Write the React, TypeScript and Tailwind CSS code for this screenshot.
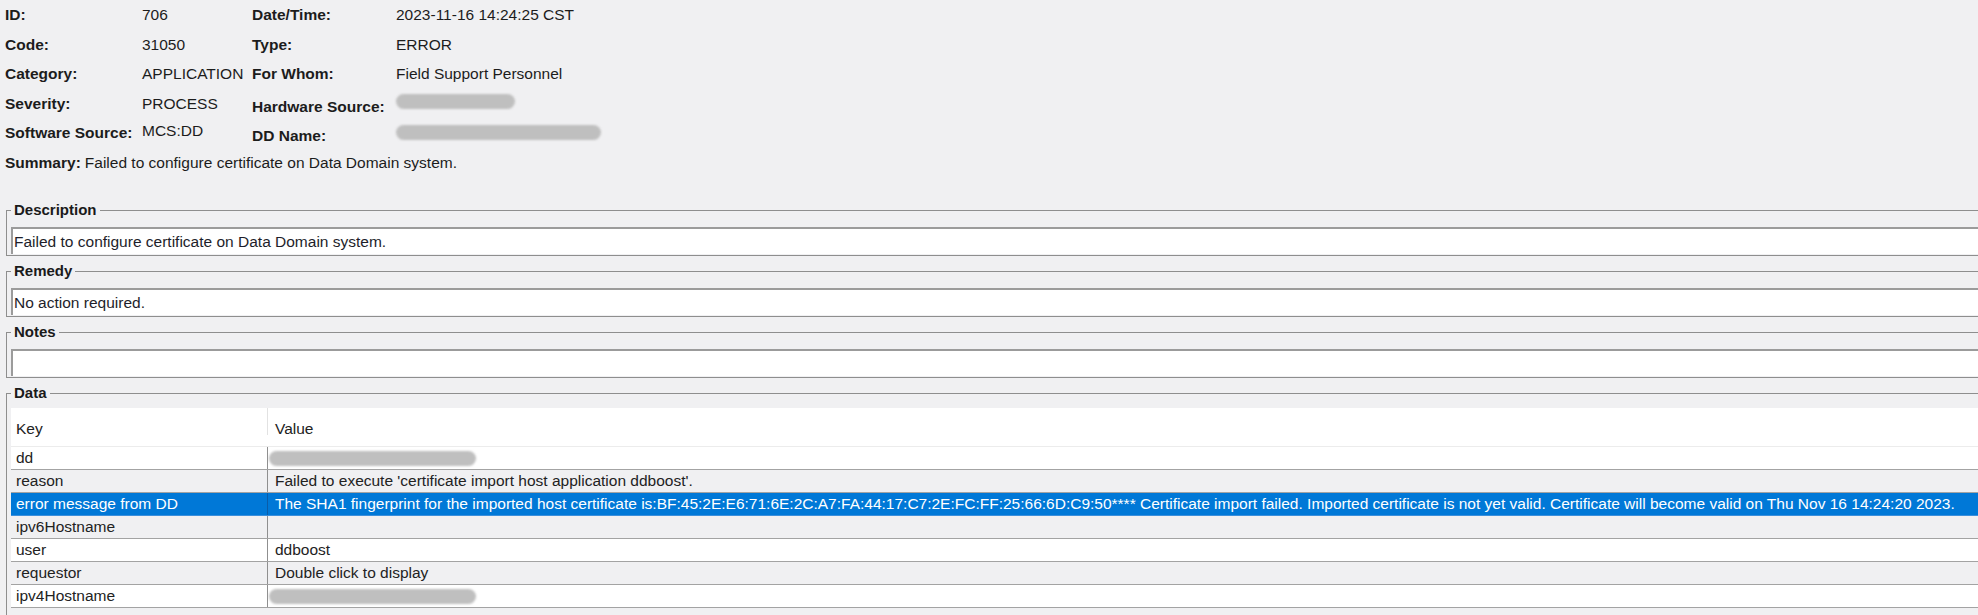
import type { ReactNode } from "react";

type Cell = string | { blur: string };

const META: [string, Cell, string, Cell][] = [
  ["ID:", "706", "Date/Time:", "2023-11-16 14:24:25 CST"],
  ["Code:", "31050", "Type:", "ERROR"],
  ["Category:", "APPLICATION", "For Whom:", "Field Support Personnel"],
  ["Severity:", "PROCESS", "Hardware Source:", { blur: "w-[119px]" }],
  ["Software Source:", "MCS:DD", "DD Name:", { blur: "w-[205px]" }],
];

const ROWS: { key: string; value: Cell }[] = [
  { key: "dd", value: { blur: "w-[207px]" } },
  { key: "reason", value: "Failed to execute 'certificate import host application ddboost'." },
  {
    key: "error message from DD",
    value:
      "The SHA1 fingerprint for the imported host certificate is:BF:45:2E:E6:71:6E:2C:A7:FA:44:17:C7:2E:FC:FF:25:66:6D:C9:50**** Certificate import failed. Imported certificate is not yet valid. Certificate will become valid on Thu Nov 16 14:24:20 2023.",
  },
  { key: "ipv6Hostname", value: "" },
  { key: "user", value: "ddboost" },
  { key: "requestor", value: "Double click to display" },
  { key: "ipv4Hostname", value: { blur: "w-[207px]" } },
];

const SELECTED = 2;

// Redacted text in the screenshot: a soft grey capsule.
function Blur({ width }: { width: string }) {
  return <span className={`inline-block h-[15px] rounded-full bg-[#bfbfbf] blur-[1px] ${width}`} />;
}

function Group({ title, children }: { title: string; children: ReactNode }) {
  return (
    <fieldset className="border border-[#8e8e8e] px-[4px] pb-[1px]">
      <legend className="px-[3px] text-[15px] leading-4 font-bold text-[#1a1a1a]">{title}</legend>
      {children}
    </fieldset>
  );
}

function TextField({ value }: { value: string }) {
  return (
    <div className="mt-[9px] h-[27px] border-t-2 border-l-2 border-[#9b9b9b] bg-white pl-[1px] leading-[25px] whitespace-nowrap text-[#1e1e2a]">
      {value}
    </div>
  );
}

export default function App() {
  return (
    <div className="h-[615px] w-[1978px] overflow-hidden bg-[#f0f0f2] font-['Liberation_Sans',Arial,sans-serif] text-[15.5px] text-[#1c1c1c]">
      <div className="w-[2020px]">
        <div className="grid grid-cols-[137px_110px_144px_1fr] pl-[5px]">
          {META.map(([l1, v1, l2, v2], i) => (
            <div key={l1} className="contents">
              <div className="flex h-[29.5px] items-center font-bold whitespace-nowrap">{l1}</div>
              <div className={`flex h-[29.5px] items-center whitespace-nowrap ${i === 4 ? "pb-[4px]" : ""}`}>
                {typeof v1 === "string" ? v1 : <Blur width={v1.blur} />}
              </div>
              <div className={`flex h-[29.5px] items-center font-bold whitespace-nowrap ${i >= 3 ? "pt-[6px]" : ""}`}>
                {l2}
              </div>
              <div className={`flex h-[29.5px] items-center whitespace-nowrap ${i === 3 ? "pb-[4px]" : ""}`}>
                {typeof v2 === "string" ? v2 : <Blur width={v2.blur} />}
              </div>
            </div>
          ))}
        </div>
        <div className="flex h-[29.5px] items-center gap-[4px] pl-[5px]">
          <span className="font-bold">Summary:</span>
          <span>Failed to configure certificate on Data Domain system.</span>
        </div>

        <div className="mt-[25px] flex flex-col gap-[7px] pl-[6px]">
          <Group title="Description">
            <TextField value="Failed to configure certificate on Data Domain system." />
          </Group>
          <Group title="Remedy">
            <TextField value="No action required." />
          </Group>
          <Group title="Notes">
            <TextField value="" />
          </Group>
          <Group title="Data">
            <div className="mt-[7px] mb-[20px]">
              <div className="flex h-[39px] border-b border-[#ececec] bg-white text-[#222]">
                <div className="h-[27px] w-[257px] border-r border-[#e2e2e2] pt-[12px] pl-[5px] leading-[18px]">Key</div>
                <div className="pt-[12px] pl-[7px] leading-[18px]">Value</div>
              </div>
              {ROWS.map((r, i) => {
                const selected = i === SELECTED;
                return (
                  <div
                    key={r.key}
                    className={`flex h-[23px] border-b leading-[22px] whitespace-nowrap ${
                      selected
                        ? "border-[#3b8fdc] bg-[#0078d7] text-white"
                        : i % 2 === 0
                          ? "border-[#a3a3a3] bg-white text-[#222]"
                          : "border-[#a3a3a3] bg-[#f0f0f2] text-[#222]"
                    }`}
                  >
                    <div
                      className={`w-[257px] shrink-0 border-r pl-[5px] ${
                        selected ? "border-[#0a5ca8]" : "border-[#8f8f8f]"
                      }`}
                    >
                      {r.key}
                    </div>
                    {typeof r.value === "string" ? (
                      <div className="pl-[7px]">{r.value}</div>
                    ) : (
                      <div className="flex items-center pl-[1px]">
                        <Blur width={r.value.blur} />
                      </div>
                    )}
                  </div>
                );
              })}
            </div>
          </Group>
        </div>
      </div>
    </div>
  );
}
